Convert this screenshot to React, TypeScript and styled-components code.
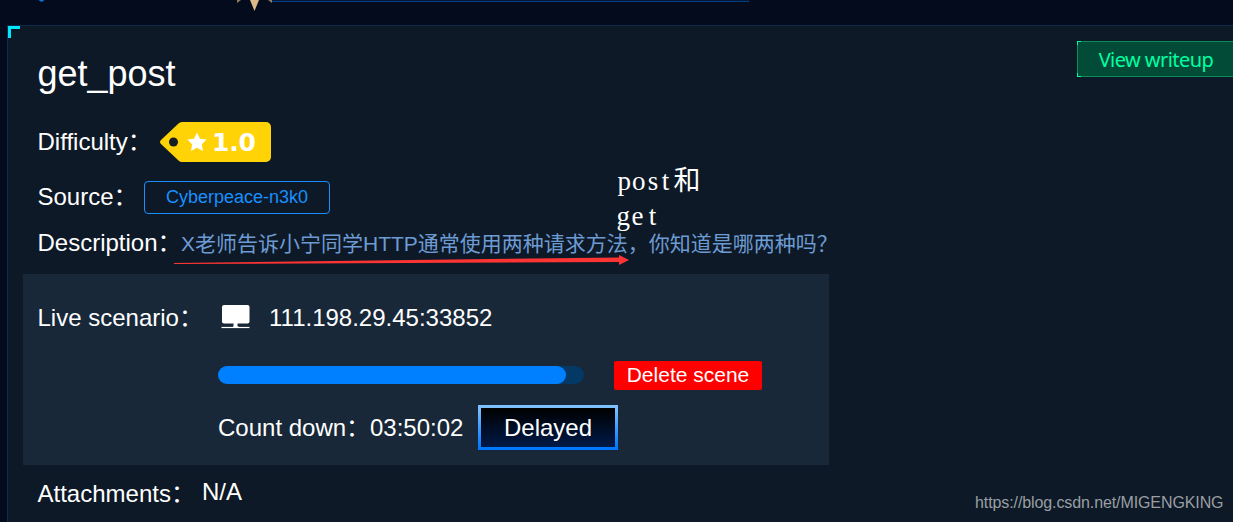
import styled, { createGlobalStyle } from 'styled-components';

const App = () => (
	<>
		<GlobalStyle />
		<Page>
			<TopStrip>
				<svg width="760" height="25" viewBox="0 0 760 25">
					<path d="M38.500 0h6l-3 2z" fill="#0a78e0" />
					<path d="M271 0.500H749" stroke="#02163a" />
					<path d="M271 1.500H749" stroke="#034080" />
					<path d="M250 0h9l-4.500 11z" fill="#dcb988" />
					<path d="M237 0h4l-4 3zM268 0h4v3z" fill="#8f7b60" />
				</svg>
			</TopStrip>
			<Panel>
				<Corner />
				<WriteupButton>
					<span>View writeup</span>
				</WriteupButton>
				<Title>get_post</Title>
				<Row $height={58}>
					<Label $width={122.5}>Difficulty：</Label>
					<DifficultyTag />
				</Row>
				<Row $height={52}>
					<Label $width={106.5}>Source：</Label>
					<SourceTag>Cyberpeace-n3k0</SourceTag>
				</Row>
				<Row $height={40}>
					<Label $width={143.5}>Description：</Label>
					<Description>X老师告诉小宁同学HTTP通常使用两种请求方法，你知道是哪两种吗？</Description>
				</Row>
				<Scene>
					<Row $height={52}>
						<Label $width={183.5}>Live scenario：</Label>
						<MonitorIcon />
						<Address>111.198.29.45:33852</Address>
					</Row>
					<SceneRow $height={62}>
						<Progress>
							<ProgressBar style={{ width: '95%' }} />
						</Progress>
						<DeleteButton>Delete scene</DeleteButton>
					</SceneRow>
					<SceneRow $height={43}>
						<Label $width={152}>Count down：</Label>
						<Label $width={108}>03:50:02</Label>
						<DelayButton>Delayed</DelayButton>
					</SceneRow>
				</Scene>
				<Row $height={57}>
					<Label $width={164.5}>Attachments：</Label>
					<Attachment>N/A</Attachment>
				</Row>
			</Panel>
			<Note width="90" height="70" viewBox="0 0 90 70">
				<text y="27" x="1.500 16 31.700 45.800 57.500">
					post和
				</text>
				<text y="62" x="0.500 15.500 32.700">
					get
				</text>
			</Note>
			<Arrow width="458" height="14" viewBox="0 0 458 14">
				<path d="M1 10L446 4.500v4.500L1 11z" fill="#fc3434" />
				<path d="M446 2l10 5-10 5z" fill="#fc3434" />
			</Arrow>
			<Watermark>https://blog.csdn.net/MIGENGKING</Watermark>
		</Page>
	</>
);

export default App;

const DifficultyTag = () => (
	<svg width="112" height="42" viewBox="0 0 112 42">
		<path
			d="M22 1H106a5 5 0 0 1 5 5V36a5 5 0 0 1-5 5H22q-2 0-3.500-1.500L1 23q-2-2 0-4L18.500 2.500Q20 1 22 1z"
			fill="#ffd305"
		/>
		<circle cx="13.500" cy="21" r="4.500" fill="#151f22" />
		<path
			d="M37 11.500l3 6.200 6.700.9-4.900 4.700 1.200 6.700-6-3.200-6 3.200 1.200-6.700-4.900-4.700 6.700-.9z"
			fill="#fff"
		/>
		<TagText x="52" y="30" textLength="44">
			1.0
		</TagText>
	</svg>
);

const MonitorIcon = () => (
	<svg width="30" height="26" viewBox="0 0 30 26">
		<rect x="1" y="0" width="27.500" height="18.500" rx="2" fill="#fff" />
		<path d="M12.500 18h4v3l2 1.500h-7l1-1.500z" fill="#fff" />
		<path d="M0.500 22.500h28" stroke="#fff" strokeWidth="1.200" />
	</svg>
);

const GlobalStyle = createGlobalStyle`
	body {
		margin: 0;
		overflow: hidden;
		background: #030b1d;
	}
	* {
		box-sizing: border-box;
	}
	button {
		margin: 0;
		padding: 0;
		font-family: inherit;
		cursor: pointer;
	}
`;

const Page = styled.div`
	position: relative;
	height: 522px;
	overflow: hidden;
	color: #fff;
	font-family: 'Liberation Sans', 'Noto Sans CJK SC', sans-serif;
	font-size: 24px;
	white-space: nowrap;
`;

const TopStrip = styled.header`
	height: 25px;
	svg {
		display: block;
	}
`;

const Panel = styled.main`
	position: relative;
	height: 510px;
	margin-left: 7px;
	border-top: 1px solid #0d2b4b;
	border-left: 1px solid #0d2b4b;
	background: #0d1926;
`;

const Corner = styled.i`
	position: absolute;
	top: 0;
	left: 0;
	width: 12px;
	height: 12px;
	border-top: 3px solid #00e8fb;
	border-left: 3px solid #00e8fb;
`;

const Title = styled.h1`
	height: 87px;
	margin: 0;
	padding-left: 29.5px;
	font-size: 36px;
	font-weight: normal;
	line-height: 96px;
`;

const Row = styled.div<{ $height: number }>`
	display: flex;
	align-items: center;
	height: ${({ $height }) => $height}px;
	padding-left: 29.5px;
`;

const Label = styled.span<{ $width: number }>`
	flex: none;
	width: ${({ $width }) => $width}px;
	line-height: 28px;
`;

const TagText = styled.text`
	fill: #fff;
	font-family: 'DejaVu Sans', sans-serif;
	font-size: 25px;
	font-weight: bold;
`;

const SourceTag = styled.span`
	width: 186px;
	height: 33px;
	border: 1px solid #1890ff;
	border-radius: 4px;
	color: #1890ff;
	font-size: 18px;
	line-height: 31px;
	text-align: center;
`;

const Description = styled.span`
	padding-top: 2px;
	color: #6d9bd3;
	font-size: 21px;
	line-height: 28px;
`;

const Scene = styled.section`
	width: 806px;
	height: 191px;
	margin: 11px 0 0 15px;
	padding-top: 18px;
	background: #182838;
	${Row} {
		padding-left: 14.5px;
	}
`;

const SceneRow = styled(Row)`
	&& {
		padding-left: 195px;
	}
`;

const Address = styled.span`
	margin-left: 18px;
`;

const Progress = styled.div`
	width: 366px;
	height: 18px;
	border-radius: 9px;
	background: #043865;
`;

const ProgressBar = styled.div`
	height: 100%;
	border-radius: 9px;
	background: #0080ff;
`;

const DeleteButton = styled.button`
	width: 148px;
	height: 29px;
	margin-left: 30px;
	border: none;
	border-radius: 2px;
	background: #f00;
	color: #fff;
	font-size: 21px;
`;

const DelayButton = styled.button`
	width: 140px;
	height: 45px;
	padding-top: 1px;
	border: 3px solid;
	border-image: linear-gradient(#80c0ff, #0078ff) 1;
	background: linear-gradient(#000, #001a48);
	color: #fff;
	font-size: 24px;
`;

const Attachment = styled.span`
	margin-bottom: 4px;
`;

const WriteupButton = styled.button`
	position: absolute;
	top: 15px;
	right: -2px;
	width: 158px;
	height: 36px;
	border: 1px solid #078f5b;
	background: #024b37;
	color: #00ffa2;
	font-family: 'Noto Sans', sans-serif;
	font-size: 20px;
	letter-spacing: -0.55px;
	&::before {
		content: '';
		position: absolute;
		top: -1px;
		bottom: -1px;
		left: -1px;
		width: 4px;
		background:
			linear-gradient(#00ffa2, #00ffa2) 0 0 / 4px 1px no-repeat,
			linear-gradient(#00ffa2, #00ffa2) 0 0 / 1px 4px no-repeat,
			linear-gradient(#00ffa2, #00ffa2) 0 100% / 4px 1px no-repeat,
			linear-gradient(#00ffa2, #00ffa2) 0 100% / 1px 4px no-repeat;
	}
`;

const Note = styled.svg`
	position: absolute;
	top: 163px;
	left: 616px;
	fill: #fff;
	font-family: 'Liberation Serif', 'Noto Sans CJK SC', serif;
	font-size: 27px;
`;

const Arrow = styled.svg`
	position: absolute;
	top: 253px;
	left: 173px;
`;

const Watermark = styled.div`
	position: absolute;
	top: 493px;
	left: 975px;
	color: #9a9fa4;
	font-size: 16px;
	line-height: 20px;
	letter-spacing: -0.1px;
`;
